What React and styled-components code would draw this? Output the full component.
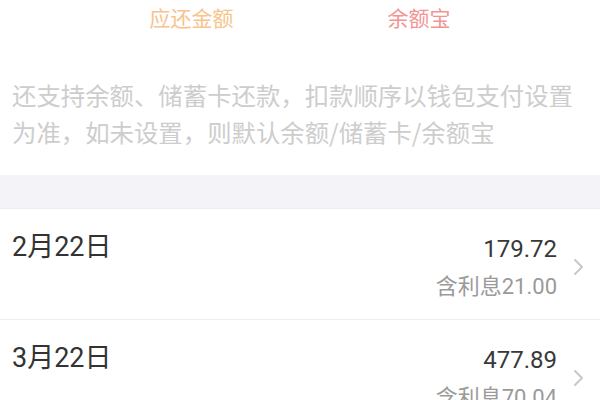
import React from 'react'
import styled, {createGlobalStyle} from 'styled-components';

const GlobalStyle = createGlobalStyle`
    body{
        margin: 0;
        background: #fff;
        font-family: Roboto, "Noto Sans CJK SC", sans-serif;
    }
`

const Pagina = styled.div`
    width: 600px;
    height: 400px;
    overflow: hidden;
    background: #fff;
`

const Cabecalho = styled.div`
    display: flex;
    justify-content: center;
    gap: 154px;
    height: 34px;
    line-height: 34px;
    font-family: "Noto Sans CJK SC", sans-serif;
    font-size: 21px;
`

const Rotulo = styled.span`
    color: ${props => props.$cor};
`

const Aviso = styled.p`
    margin: 0 0 25px;
    padding: 42px 20px 0 12px;
    font-family: "Noto Sans CJK SC", sans-serif;
    font-size: 24.4px;
    line-height: 37px;
    color: #cdcdcd;
`

const Faixa = styled.div`
    height: 33px;
    background: #f4f4f8;
    border-bottom: 1px solid #ededf0;
`

const Linha = styled.div`
    display: flex;
    align-items: flex-start;
    padding: 23px 15px 18px 12px;
    border-bottom: 1px solid #eeeeee;
`

const Data = styled.div`
    flex: 1;
    font-size: 27px;
    line-height: 30px;
    color: #333;
`

const Valores = styled.div`
    margin-top: 2px;
    text-align: right;
`

const Valor = styled.div`
    font-size: 24px;
    line-height: 30px;
    color: #383838;
`

const Juros = styled.div`
    margin-top: 9px;
    font-size: 22px;
    line-height: 28px;
    color: #9a9a9a;
`

const Seta = styled.svg`
    align-self: center;
    margin-left: 15px;
    flex-shrink: 0;
`

const parcelas = [
    {data: '2月22日', valor: '179.72', juros: '21.00'},
    {data: '3月22日', valor: '477.89', juros: '70.04'},
]

const App = () => {
  return (
    <Pagina>
        <GlobalStyle />
        <Cabecalho>
            <Rotulo $cor="#f7c48c">应还金额</Rotulo>
            <Rotulo $cor="#f39494">余额宝</Rotulo>
        </Cabecalho>

        <Aviso>还支持余额、储蓄卡还款，扣款顺序以钱包支付设置为准，如未设置，则默认余额/储蓄卡/余额宝</Aviso>

        <Faixa />

        {parcelas.map(p => (
            <Linha key={p.data}>
                <Data>{p.data}</Data>
                <Valores>
                    <Valor>{p.valor}</Valor>
                    <Juros>含利息{p.juros}</Juros>
                </Valores>
                <Seta width="13" height="18" viewBox="0 0 13 18">
                    <path d="M3 2 L10 9 L3 16" fill="none" stroke="#c8c8cc" strokeWidth="2" strokeLinecap="round" strokeLinejoin="round"/>
                </Seta>
            </Linha>
        ))}
    </Pagina>
  )
}

export default App
